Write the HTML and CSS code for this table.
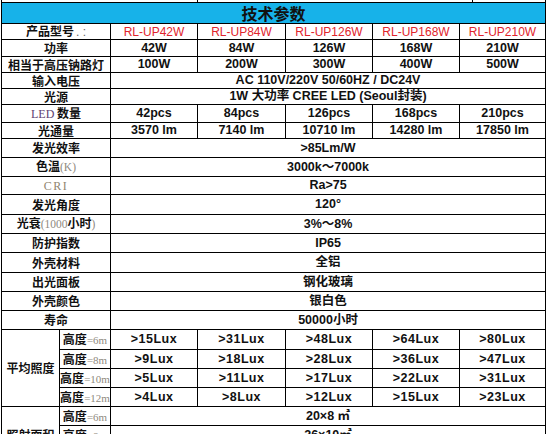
FILE: index.html
```html
<!DOCTYPE html>
<html lang="zh">
<head>
<meta charset="utf-8">
<title>技术参数</title>
<link rel="stylesheet" href="styles.css">
</head>
<body>
<div class="sheet">
  <div class="strip"><span class="s1"></span><span class="s2"></span><span class="s3"></span></div>
  <table class="spec">
    <colgroup>
      <col class="c-a"><col class="c-b"><col class="c-m1"><col class="c-m2"><col class="c-m3"><col class="c-m4"><col class="c-m5">
    </colgroup>
    <tr class="h21"><td colspan="7" class="title">技术参数</td></tr>
    <tr class="h16"><th colspan="2">产品型号<span class="dim">. :</span></th><td class="model">RL-UP42W</td><td class="model">RL-UP84W</td><td class="model">RL-UP126W</td><td class="model">RL-UP168W</td><td class="model">RL-UP210W</td></tr>
    <tr class="h17"><th colspan="2">功率</th><td>42W</td><td>84W</td><td>126W</td><td>168W</td><td>210W</td></tr>
    <tr class="h16"><th colspan="2">相当于高压钠路灯</th><td>100W</td><td>200W</td><td>300W</td><td>400W</td><td>500W</td></tr>
    <tr class="h16"><th colspan="2">输入电压</th><td colspan="5" class="pre">AC 110V/220V  50/60HZ /  DC24V</td></tr>
    <tr class="h16"><th colspan="2">光源</th><td colspan="5" class="pre">1W 大功率 CREE LED  (Seoul封装)</td></tr>
    <tr class="h18"><th colspan="2"><span class="led">LED</span> 数量</th><td>42pcs</td><td>84pcs</td><td>126pcs</td><td>168pcs</td><td>210pcs</td></tr>
    <tr class="h16"><th colspan="2">光通量</th><td>3570 lm</td><td>7140 lm</td><td>10710 lm</td><td>14280 lm</td><td>17850 lm</td></tr>
    <tr class="h19"><th colspan="2">发光效率</th><td colspan="5">&gt;85Lm/W</td></tr>
    <tr class="h19"><th colspan="2">色温<span class="ser">(K)</span></th><td colspan="5">3000k～7000k</td></tr>
    <tr class="h18"><th colspan="2"><span class="cri">CRI</span></th><td colspan="5">Ra&gt;75</td></tr>
    <tr class="h20"><th colspan="2">发光角度</th><td colspan="5">120°</td></tr>
    <tr class="h19"><th colspan="2">光衰<span class="ser">(1000</span>小时<span class="ser">)</span></th><td colspan="5">3%～8%</td></tr>
    <tr class="h19"><th colspan="2">防护指数</th><td colspan="5">IP65</td></tr>
    <tr class="h20"><th colspan="2">外壳材料</th><td colspan="5">全铝</td></tr>
    <tr class="h19"><th colspan="2">出光面板</th><td colspan="5">钢化玻璃</td></tr>
    <tr class="h19"><th colspan="2">外壳颜色</th><td colspan="5">银白色</td></tr>
    <tr class="h19"><th colspan="2">寿命</th><td colspan="5">50000小时</td></tr>
    <tr class="h20"><th rowspan="4">平均照度</th><th class="ht">高度<span class="ser">=6m</span></th><td class="lux">&gt;15Lux</td><td class="lux">&gt;31Lux</td><td class="lux">&gt;48Lux</td><td class="lux">&gt;64Lux</td><td class="lux">&gt;80Lux</td></tr>
    <tr class="h19"><th class="ht">高度<span class="ser">=8m</span></th><td class="lux">&gt;9Lux</td><td class="lux">&gt;18Lux</td><td class="lux">&gt;28Lux</td><td class="lux">&gt;36Lux</td><td class="lux">&gt;47Lux</td></tr>
    <tr class="h19"><th class="ht">高度<span class="ser">=10m</span></th><td class="lux">&gt;5Lux</td><td class="lux">&gt;11Lux</td><td class="lux">&gt;17Lux</td><td class="lux">&gt;22Lux</td><td class="lux">&gt;31Lux</td></tr>
    <tr class="h19"><th class="ht">高度<span class="ser">=12m</span></th><td class="lux">&gt;4Lux</td><td class="lux">&gt;8Lux</td><td class="lux">&gt;12Lux</td><td class="lux">&gt;15Lux</td><td class="lux">&gt;23Lux</td></tr>
    <tr class="h19"><th rowspan="3">照射面积</th><th class="ht">高度<span class="ser">=6m</span></th><td colspan="5">20×8 ㎡</td></tr>
    <tr class="h19"><th class="ht">高度<span class="ser">=8m</span></th><td colspan="5">26×10㎡</td></tr>
    <tr class="h19"><th class="ht">高度<span class="ser">=10m</span></th><td colspan="5">32×12㎡</td></tr>
  </table>
</div>
</body>
</html>
```

FILE: styles.css
```css
body {
  margin: 0;
  background: #ffffff;
}

.sheet {
  padding-left: 1px;
  width: 545px;
}

.strip {
  display: flex;
  height: 2px;
  border-left: 1px solid #000;
  box-sizing: border-box;
}

.strip span {
  border-right: 1px solid #000;
  box-sizing: border-box;
}

.s1 { width: 196px; }
.s2 { width: 275px; }
.s3 { width: 73px; }

.spec {
  border-collapse: collapse;
  table-layout: fixed;
  width: 545px;
  font-family: "Liberation Sans", "Noto Sans CJK SC", sans-serif;
  font-size: 12.5px;
  font-weight: bold;
  color: #111;
}

.c-a { width: 58px; }
.c-b { width: 51px; }
.c-m1 { width: 87px; }
.c-m2 { width: 88px; }
.c-m3 { width: 87px; }
.c-m4 { width: 87px; }
.c-m5 { width: 86px; }

.spec td,
.spec th {
  border: 1px solid #000;
  padding: 0;
  text-align: center;
  vertical-align: middle;
  line-height: 1;
  white-space: nowrap;
  overflow: hidden;
}

.spec th {
  font-family: "Noto Sans CJK SC", "Liberation Sans", sans-serif;
  font-size: 12px;
  font-weight: bold;
  color: #111;
}

.h16 { height: 16px; }
.h17 { height: 17px; }
.h18 { height: 18px; }
.h19 { height: 19px; }
.h20 { height: 20px; }
.h21 { height: 21px; }

.title {
  background: #17b2e9;
  font-family: "Noto Sans CJK SC", sans-serif;
  font-size: 16px;
  font-weight: bold;
  color: #111;
}

.model {
  font-size: 12px;
  font-weight: normal;
  color: #e0242c;
}

.pre {
  white-space: pre;
}

.dim {
  font-family: "Liberation Sans", sans-serif;
  font-weight: normal;
  color: #666;
  margin-left: 2px;
}

.ser {
  font-family: "Liberation Serif", serif;
  font-weight: normal;
  color: #8f8a80;
  font-size: 11.5px;
}

.ht .ser {
  font-size: 11px;
}

.led {
  font-family: "Liberation Serif", serif;
  font-weight: normal;
  color: #5e3f72;
  font-size: 12px;
}

.cri {
  font-family: "Liberation Serif", serif;
  font-weight: normal;
  color: #8f8570;
  letter-spacing: 1.5px;
  font-size: 12px;
}

.lux {
  letter-spacing: 0.5px;
}
```
